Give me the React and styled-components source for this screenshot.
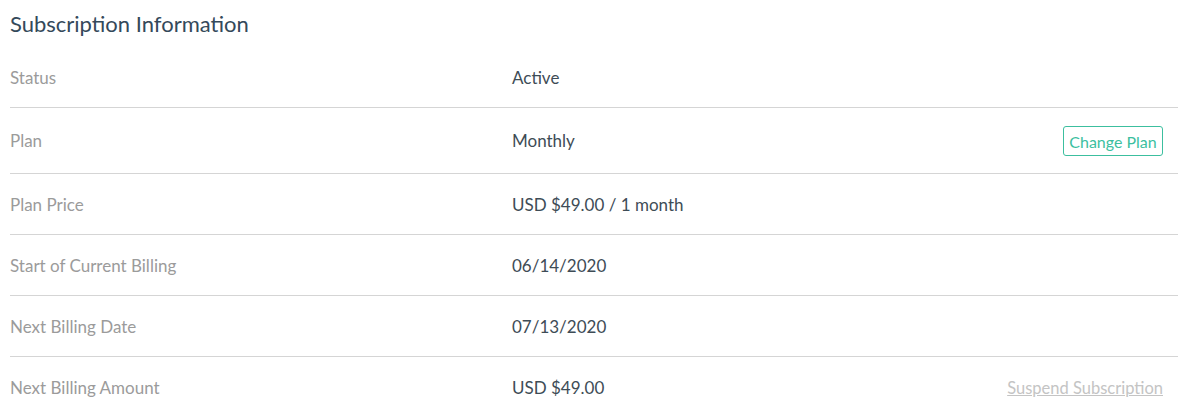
import React from "react";
import styled, { createGlobalStyle } from "styled-components";

const GlobalStyle = createGlobalStyle`
  body {
    margin: 0;
    background: #fff;
    font-family: Lato, "Noto Sans", sans-serif;
  }
`;

const rows = [
  { label: "Status", value: "Active" },
  { label: "Plan", value: "Monthly", action: "change" },
  { label: "Plan Price", value: "USD $49.00 / 1 month" },
  { label: "Start of Current Billing", value: "06/14/2020" },
  { label: "Next Billing Date", value: "07/13/2020" },
  { label: "Next Billing Amount", value: "USD $49.00", action: "suspend" },
];

function App() {
  return (
    <>
      <GlobalStyle />
      <Container>
        <Title>Subscription Information</Title>
        <List>
          {rows.map((row, index) => (
            <Row key={index} last={index === rows.length - 1}>
              <Label>{row.label}</Label>
              <Value>{row.value}</Value>
              <Action>
                {row.action === "change" && <ChangeButton>Change Plan</ChangeButton>}
                {row.action === "suspend" && <SuspendLink href="#">Suspend Subscription</SuspendLink>}
              </Action>
            </Row>
          ))}
        </List>
      </Container>
    </>
  );
}

export default App;

const Container = styled.div`
  padding: 10px 22px 0 10px;
`;

const Title = styled.h2`
  margin: 0 0 9px;
  font-size: 22px;
  line-height: 28px;
  font-weight: 400;
  color: #34495a;
`;

const List = styled.div`
  display: flex;
  flex-direction: column;
`;

const Row = styled.div`
  display: grid;
  grid-template-columns: 502px 1fr auto;
  align-items: center;
  min-height: 26px;
  padding: 18px 15px 16.3px 0;
  border-bottom: ${({ last }) => (last ? "none" : "1px solid #d5d5d5")};
`;

const Label = styled.div`
  font-size: 17px;
  line-height: 26px;
  color: #9b9b9b;
`;

const Value = styled.div`
  font-size: 17px;
  line-height: 26px;
  color: #3e4c56;
`;

const Action = styled.div`
  display: flex;
  justify-content: flex-end;
`;

const ChangeButton = styled.button`
  height: 30px;
  width: 100px;
  padding: 0;
  border: 1px solid #3cbf9f;
  border-radius: 3px;
  background: #fff;
  color: #3cbf9f;
  font-family: inherit;
  font-size: 16px;
  cursor: pointer;
`;

const SuspendLink = styled.a`
  font-size: 16.5px;
  line-height: 26px;
  color: #c4c4c4;
  text-decoration: underline;
`;
